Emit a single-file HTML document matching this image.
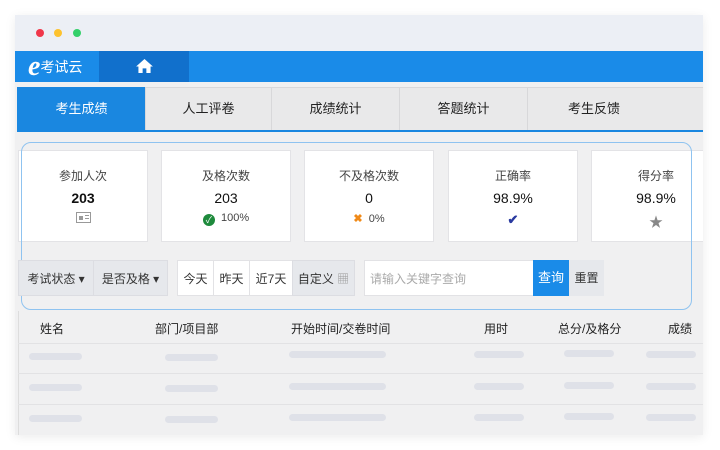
<!DOCTYPE html>
<html><head><meta charset="utf-8"><style>
*{margin:0;padding:0;box-sizing:border-box}
body{width:720px;height:450px;background:#fff;font-family:"Liberation Sans","Noto Sans CJK SC",sans-serif;position:relative;overflow:hidden}
.a{position:absolute}
.win{left:15px;top:15px;width:688px;height:420px;background:#f0f0f1;box-shadow:0 2px 10px rgba(0,0,0,.08);overflow:hidden}
.title{left:0;top:0;width:690px;height:36px;background:#eceff5}
.dot{width:8px;height:8px;border-radius:50%;top:14px}
.nav{left:0;top:36px;width:690px;height:31px;background:#1a8be8}
.tab{top:72px;height:44px;background:#e9e9ea;border:1px solid #d8d8da;font-size:13px;color:#222;text-align:center;line-height:42px}
.card{top:135px;height:92px;background:#fff;border:1px solid #e3e3e6;text-align:center}
.card .t{font-size:12px;color:#444;margin-top:16px}
.card .v{font-size:14px;color:#111;margin-top:6px}
.card .i{font-size:11px;color:#444;margin-top:6px;height:14px}
.btn{top:245px;height:36px;font-size:12px;color:#333;line-height:36px;text-align:center}
.th{top:305px;font-size:12px;color:#222}
.sk{height:7px;border-radius:4px;background:#dfe1e8}
.hl{left:3px;width:687px;height:1px;background:#e2e2e4}
</style></head><body>
<div class="a win">
 <div class="a title"></div>
 <div class="a dot" style="left:21px;background:#f0374a"></div>
 <div class="a dot" style="left:39px;background:#fdc22e"></div>
 <div class="a dot" style="left:58px;background:#34d06a"></div>
 <div class="a nav"></div>
 <div class="a" style="left:13px;top:36px;height:31px;line-height:31px;color:#fff;font-size:14px"><span style="font-size:28px;font-style:italic;font-weight:bold;font-family:'Liberation Serif',serif;vertical-align:-3px">e</span>考试云</div>
 <div class="a" style="left:84px;top:36px;width:90px;height:31px;background:#1170cc"></div>
 <svg class="a" style="left:121px;top:44px" width="17" height="14" viewBox="0 0 18 15"><path d="M9 0L0 8h2.5v7h4.5v-5h4v5h4.5V8H18z" fill="#fff"/></svg>
 <div class="a tab" style="left:2px;width:129px;background:#1a87e0;color:#fff;border-color:#1a87e0">考生成绩</div>
 <div class="a tab" style="left:130px;width:127px">人工评卷</div>
 <div class="a tab" style="left:256px;width:129px">成绩统计</div>
 <div class="a tab" style="left:384px;width:129px">答题统计</div>
 <div class="a tab" style="left:512px;width:178px;text-align:left;padding-left:40px">考生反馈</div>
 <div class="a" style="left:2px;top:115px;width:688px;height:2px;background:#1a87e0"></div>
 <div class="a card" style="left:3px;width:130px"><div class="t">参加人次</div><div class="v" style="font-weight:bold">203</div><div class="i"><svg width="15" height="11"><rect x=".5" y=".5" width="14" height="10" fill="#fff" stroke="#999"/><rect x="3" y="4" width="4" height="4" fill="#999"/><rect x="9" y="3" width="4" height="1" fill="#999"/><rect x="9" y="6" width="4" height="1" fill="#999"/></svg></div></div>
 <div class="a card" style="left:146px;width:130px"><div class="t">及格次数</div><div class="v">203</div><div class="i"><span style="display:inline-block;width:12px;height:12px;border-radius:50%;background:#1e8a3c;color:#fff;font-size:9px;line-height:12px;vertical-align:-2px">✓</span>&nbsp; 100%</div></div>
 <div class="a card" style="left:289px;width:130px"><div class="t">不及格次数</div><div class="v">0</div><div class="i"><span style="color:#f08a18;font-weight:bold">✖</span>&nbsp; 0%</div></div>
 <div class="a card" style="left:433px;width:130px"><div class="t">正确率</div><div class="v">98.9%</div><div class="i" style="color:#2a3aa0;font-size:13px;font-weight:bold">✔</div></div>
 <div class="a card" style="left:576px;width:130px"><div class="t">得分率</div><div class="v">98.9%</div><div class="i" style="color:#888;font-size:14px">★</div></div>
 <div class="a" style="left:6px;top:127px;width:671px;height:168px;border:1px solid #8fc3f0;border-radius:10px"></div>
 <div class="a btn" style="left:3px;width:76px;background:#e6e8ec;border:1px solid #dcdde2">考试状态 ▾</div>
 <div class="a btn" style="left:78px;width:75px;background:#e6e8ec;border:1px solid #dcdde2">是否及格 ▾</div>
 <div class="a btn" style="left:162px;width:37px;background:#fff;border:1px solid #e2e2e5">今天</div>
 <div class="a btn" style="left:198px;width:37px;background:#fff;border:1px solid #e2e2e5">昨天</div>
 <div class="a btn" style="left:234px;width:44px;background:#fff;border:1px solid #e2e2e5">近7天</div>
 <div class="a btn" style="left:277px;width:63px;background:#e6e8ec;border:1px solid #dcdde2">自定义 <span style="color:#999">▦</span></div>
 <div class="a btn" style="left:349px;width:170px;background:#fff;border:1px solid #e2e2e5;color:#aaa;text-align:left;padding-left:5px">请输入关键字查询</div>
 <div class="a btn" style="left:518px;width:36px;background:#1a8be8;color:#fff;font-size:13px">查询</div>
 <div class="a btn" style="left:554px;width:35px;background:#e6e8ec">重置</div>
 <div class="a" style="left:3px;top:296px;width:1px;height:124px;background:#ddd"></div>
 <div class="a th" style="left:25px">姓名</div>
 <div class="a th" style="left:140px">部门/项目部</div>
 <div class="a th" style="left:276px">开始时间/交卷时间</div>
 <div class="a th" style="left:469px">用时</div>
 <div class="a th" style="left:543px">总分/及格分</div>
 <div class="a th" style="left:653px">成绩</div>
 <div class="a hl" style="top:328px"></div>
 <div class="a hl" style="top:358px"></div>
 <div class="a hl" style="top:389px"></div>
 <div class="a sk" style="left:14px;top:338px;width:53px"></div>
 <div class="a sk" style="left:150px;top:339px;width:53px"></div>
 <div class="a sk" style="left:274px;top:336px;width:97px"></div>
 <div class="a sk" style="left:459px;top:336px;width:50px"></div>
 <div class="a sk" style="left:549px;top:335px;width:50px"></div>
 <div class="a sk" style="left:631px;top:336px;width:50px"></div>
 <div class="a sk" style="left:14px;top:369px;width:53px"></div>
 <div class="a sk" style="left:150px;top:370px;width:53px"></div>
 <div class="a sk" style="left:274px;top:368px;width:97px"></div>
 <div class="a sk" style="left:459px;top:368px;width:50px"></div>
 <div class="a sk" style="left:549px;top:367px;width:50px"></div>
 <div class="a sk" style="left:631px;top:368px;width:50px"></div>
 <div class="a sk" style="left:14px;top:400px;width:53px"></div>
 <div class="a sk" style="left:150px;top:401px;width:53px"></div>
 <div class="a sk" style="left:274px;top:399px;width:97px"></div>
 <div class="a sk" style="left:459px;top:399px;width:50px"></div>
 <div class="a sk" style="left:549px;top:398px;width:50px"></div>
 <div class="a sk" style="left:631px;top:399px;width:50px"></div>
</div>
</body></html>
